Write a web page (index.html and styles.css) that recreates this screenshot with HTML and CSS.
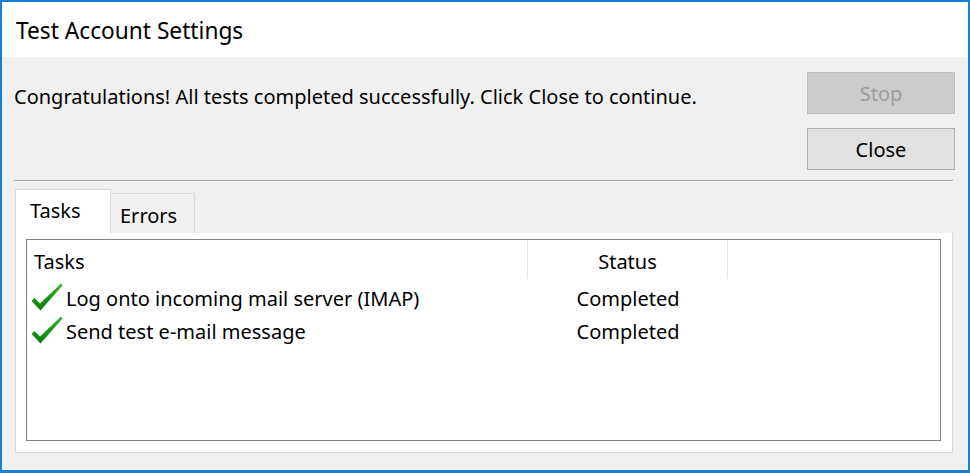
FILE: index.html
```html
<!DOCTYPE html>
<html>
<head>
<meta charset="utf-8">
<link rel="stylesheet" href="styles.css">
</head>
<body>
<div class="window">
  <div class="titlebar">Test Account Settings</div>
  <div class="content">
    <div class="top">
      <div class="message">Congratulations! All tests completed successfully. Click Close to continue.</div>
      <div class="buttons">
        <div class="btn disabled">Stop</div>
        <div class="btn">Close</div>
      </div>
    </div>
    <div class="separator"></div>
    <div class="tabs">
      <div class="tab active">Tasks</div>
      <div class="tab">Errors</div>
    </div>
    <div class="panel">
      <div class="list">
        <div class="row header">
          <div class="col c1">Tasks</div>
          <div class="col c2">Status</div>
          <div class="col c3"></div>
        </div>
        <div class="row item">
          <div class="col c1">
            <svg class="check" viewBox="0 0 32 28" width="32" height="28"><defs><linearGradient id="g" x1="0" y1="0" x2="0" y2="1"><stop offset="0" stop-color="#2fb52f"/><stop offset="1" stop-color="#0a7d0a"/></linearGradient></defs><path d="M0.5,18 L3.5,15 L9,20.5 L30,0.5 L31.5,2.5 L9.5,27.5 Z" fill="url(#g)"/></svg>
            <span>Log onto incoming mail server (IMAP)</span>
          </div>
          <div class="col c2">Completed</div>
          <div class="col c3"></div>
        </div>
        <div class="row item">
          <div class="col c1">
            <svg class="check" viewBox="0 0 32 28" width="32" height="28"><path d="M0.5,18 L3.5,15 L9,20.5 L30,0.5 L31.5,2.5 L9.5,27.5 Z" fill="url(#g)"/></svg>
            <span>Send test e-mail message</span>
          </div>
          <div class="col c2">Completed</div>
          <div class="col c3"></div>
        </div>
      </div>
    </div>
  </div>
</div>
</body>
</html>
```
FILE: styles.css
```css
html, body {
  margin: 0;
  padding: 0;
}
body {
  width: 970px;
  height: 473px;
  font-family: "Noto Sans", "Open Sans", sans-serif;
  color: #000;
}
.window {
  box-sizing: border-box;
  width: 970px;
  height: 473px;
  border: 2px solid #1681d6;
  border-bottom-width: 3px;
  display: flex;
  flex-direction: column;
  background: #f0f0f0;
}
.titlebar {
  height: 55px;
  background: #fff;
  padding-left: 14px;
  font-size: 22.7px;
  line-height: 57px;
  box-sizing: border-box;
}
.content {
  flex: 1;
  padding: 15px 13px 0 12px;
  display: flex;
  flex-direction: column;
}
.top {
  display: flex;
  justify-content: space-between;
}
.message {
  font-size: 20px;
  padding-top: 13px;
  line-height: 24px;
}
.buttons {
  display: flex;
  flex-direction: column;
  gap: 14px;
}
.btn {
  box-sizing: border-box;
  width: 148px;
  height: 42px;
  border: 1px solid #adadad;
  background: #e1e1e1;
  font-size: 20px;
  text-align: center;
  line-height: 41px;
}
.btn.disabled {
  border-color: #bfbfbf;
  background: #cccccc;
  color: #9c9c9c;
}
.separator {
  margin: 10px 2px 0 0;
  border-top: 1px solid #a0a0a0;
  border-bottom: 1px solid #fff;
}
.tabs {
  display: flex;
  align-items: flex-end;
  margin-top: 7px;
  padding-left: 1px;
  height: 44px;
}
.tab {
  box-sizing: border-box;
  height: 40px;
  padding: 0 9px;
  width: 84px;
  border: 1px solid #d9d9d9;
  border-bottom: none;
  border-left: none;
  background: #f0f0f0;
  font-size: 20px;
  line-height: 44px;
}
.tab.active {
  height: 44px;
  width: 96px;
  background: #fff;
  border-left: 1px solid #d9d9d9;
  padding-left: 14px;
  line-height: 42px;
}
.panel {
  box-sizing: border-box;
  margin-left: 1px;
  width: 938px;
  height: 220px;
  background: #fff;
  border: 1px solid #d9d9d9;
  border-top: none;
  padding: 6px 11px 11px 10px;
}
.list {
  box-sizing: border-box;
  height: 202px;
  border: 1px solid #828282;
  font-size: 20px;
}
.row {
  display: flex;
}
.row.header {
  height: 39px;
  line-height: 44px;
}
.row.item {
  height: 33px;
  line-height: 33px;
}
.col {
  box-sizing: border-box;
}
.c1 {
  width: 501px;
  padding-left: 7px;
}
.item .c1 {
  display: flex;
  align-items: center;
  padding-left: 4px;
}
.c2 {
  width: 200px;
  text-align: center;
}
.c3 {
  flex: 1;
}
.header .c1,
.header .c2 {
  border-right: 1px solid #e5e5e5;
}
.check {
  flex: none;
  margin-right: 3px;
  margin-top: -3px;
}
.list .row.header + .row.item {
  margin-top: 3px;
}
```
